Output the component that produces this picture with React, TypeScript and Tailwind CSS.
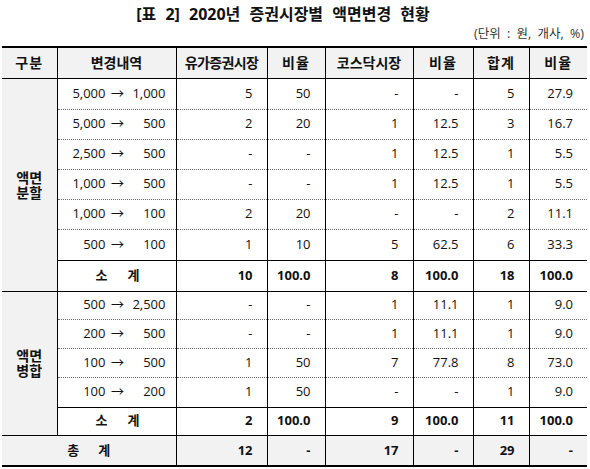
import React from 'react'

type Row = [string, string, string, string, string, string, string, string]

const split: Row[] = [
  ['5,000', '1,000', '5', '50', '-', '-', '5', '27.9'],
  ['5,000', '500', '2', '20', '1', '12.5', '3', '16.7'],
  ['2,500', '500', '-', '-', '1', '12.5', '1', '5.5'],
  ['1,000', '500', '-', '-', '1', '12.5', '1', '5.5'],
  ['1,000', '100', '2', '20', '-', '-', '2', '11.1'],
  ['500', '100', '1', '10', '5', '62.5', '6', '33.3'],
]

const merge: Row[] = [
  ['500', '2,500', '-', '-', '1', '11.1', '1', '9.0'],
  ['200', '500', '-', '-', '1', '11.1', '1', '9.0'],
  ['100', '500', '1', '50', '7', '77.8', '8', '73.0'],
  ['100', '200', '1', '50', '-', '-', '1', '9.0'],
]

const colWidths = [55, 119, 91, 58, 88, 60, 56, 58]

// horizontal rules
const dotted = 'border-b border-b-[#6b6b6b] [border-bottom-style:dotted]'
const solid = 'border-b border-b-black'

function Change({ from, to }: { from: string; to: string }) {
  return (
    <div className="flex justify-end pr-[10px]">
      <span className="w-[38px] text-right">{from}</span>
      <span className="w-[24px] text-center">→</span>
      <span className="w-[36px] text-right">{to}</span>
    </div>
  )
}

function Nums({ values, rule, bold }: { values: string[]; rule: string; bold?: boolean }) {
  return (
    <>
      {values.map((v, i) => (
        <td
          key={i}
          className={`${rule} ${i < values.length - 1 ? 'border-r border-r-black' : ''} text-right pr-[14px] ${bold ? 'font-bold' : ''}`}
        >
          {v}
        </td>
      ))}
    </>
  )
}

function Section({ label, rows, sub, heights, subH }: { label: [string, string]; rows: Row[]; sub: string[]; heights: number[]; subH: string }) {
  return (
    <>
      {rows.map((r, i) => (
        <tr key={i} style={{ height: heights[i] }}>
          {i === 0 && (
            <td
              rowSpan={rows.length + 1}
              className="bg-[#f2f2f2] border-r border-r-black border-b border-b-black text-center font-bold text-[14px] leading-[15px]"
            >
              {label[0]}
              <br />
              {label[1]}
            </td>
          )}
          <td className={`${i === rows.length - 1 ? solid : dotted} border-r border-r-black`}>
            <Change from={r[0]} to={r[1]} />
          </td>
          <Nums values={r.slice(2)} rule={i === rows.length - 1 ? solid : dotted} />
        </tr>
      ))}
      <tr className={subH}>
        <td className={`${solid} border-r border-r-black font-bold`}>
          <div className="flex justify-center gap-[20px] pl-[2px]">
            <span>소</span>
            <span>계</span>
          </div>
        </td>
        <Nums values={sub} rule={solid} bold />
      </tr>
    </>
  )
}

export default function App() {
  return (
    <div className="w-[590px] h-[469px] bg-white text-[#111] font-['Open_Sans','Noto_Sans_CJK_KR',sans-serif] text-[13px] pt-[4px]">
      <div className="text-center pr-[24px] text-[16px] leading-[20px] font-bold [word-spacing:5px]">
        [표 2] 2020년 증권시장별 액면변경 현황
      </div>
      <div className="mt-[2px] text-right pr-[6px] text-[12.5px] leading-[16px] text-[#333] [word-spacing:3px]">(단위 : 원, 개사, %)</div>

      <table className="mt-[4px] ml-[2px] w-[585px] table-fixed border-collapse">
        <colgroup>
          {colWidths.map((w, i) => (
            <col key={i} style={{ width: w }} />
          ))}
        </colgroup>
        <thead>
          <tr className="h-[31px]">
            {['구분', '변경내역', '유가증권시장', '비율', '코스닥시장', '비율', '합계', '비율'].map((h, i) => (
              <th
                key={i}
                className={`bg-[#f2f2f2] border-t-2 border-t-black border-b border-b-black ${i < 7 ? 'border-r border-r-black' : ''} text-center font-bold text-[14px] ${
                  i === 2 ? 'tracking-[-0.6px]' : i === 0 || i === 3 || i === 5 || i === 7 || i === 6 ? 'tracking-[1px]' : ''
                }`}
              >
                {h}
              </th>
            ))}
          </tr>
        </thead>
        <tbody>
          <Section
            label={['액면', '분할']}
            rows={split}
            heights={[31, 30, 30, 30, 30, 31]}
            sub={['10', '100.0', '8', '100.0', '18', '100.0']}
            subH="h-[31px]"
          />
          <Section
            label={['액면', '병합']}
            rows={merge}
            heights={[28, 29, 29, 30]}
            sub={['2', '100.0', '9', '100.0', '11', '100.0']}
            subH="h-[28px]"
          />
          <tr className="h-[31px] bg-[#f2f2f2] font-bold">
            <td colSpan={2} className="border-b-2 border-b-black border-r border-r-black">
              <div className="flex justify-center gap-[19px]">
                <span>총</span>
                <span>계</span>
              </div>
            </td>
            <Nums values={['12', '-', '17', '-', '29', '-']} rule="border-b-2 border-b-black" />
          </tr>
        </tbody>
      </table>
    </div>
  )
}
